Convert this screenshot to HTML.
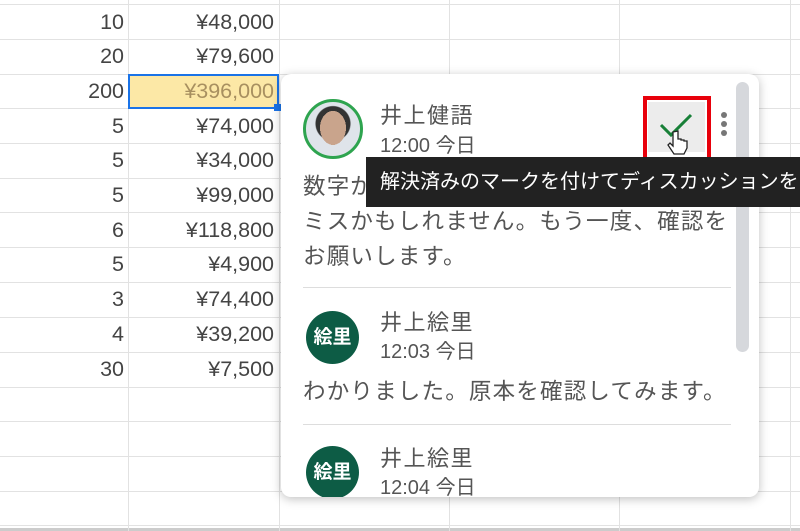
<!DOCTYPE html>
<html><head><meta charset="utf-8"><style>
*{margin:0;padding:0;box-sizing:border-box}
body{width:800px;height:531px;overflow:hidden;background:#fff;position:relative;font-family:"Liberation Sans","Noto Sans CJK JP",sans-serif}
.h{position:absolute;left:0;width:800px;height:1px;background:#e2e2e2}
.v{position:absolute;top:0;height:531px;width:1px;background:#e2e2e2}
.c{position:absolute;font-size:21.5px;color:#444;text-align:right;height:35px;line-height:35px}
.card{position:absolute;left:281px;top:74px;width:478px;height:423px;background:#fff;border-radius:10px;box-shadow:0 2px 10px rgba(0,0,0,.25);overflow:hidden}
.av{position:absolute;border-radius:50%}
.nm{position:absolute;left:99px;font-size:22px;letter-spacing:1.5px;color:#555}
.tm{position:absolute;left:99px;font-size:20px;color:#555}
.tx{position:absolute;left:22px;font-size:22.5px;letter-spacing:1.2px;color:#555;line-height:35px;white-space:nowrap}
.dv{position:absolute;left:22px;width:428px;height:1px;background:#ddd}
.ini{background:#0d5c45;color:#fff;font-size:19px;text-align:center;font-weight:bold}
</style></head><body>
<div class="h" style="top:4px"></div><div class="h" style="top:39px"></div><div class="h" style="top:74px"></div><div class="h" style="top:108px"></div><div class="h" style="top:143px"></div><div class="h" style="top:178px"></div><div class="h" style="top:212px"></div><div class="h" style="top:247px"></div><div class="h" style="top:282px"></div><div class="h" style="top:317px"></div><div class="h" style="top:352px"></div><div class="h" style="top:387px"></div><div class="h" style="top:421px"></div><div class="h" style="top:456px"></div><div class="h" style="top:491px"></div><div class="h" style="top:525px"></div>
<div class="h" style="top:528px;height:3px;background:#ccc"></div>
<div class="v" style="left:128px"></div><div class="v" style="left:279px"></div><div class="v" style="left:449px"></div><div class="v" style="left:619px"></div><div class="v" style="left:790px"></div>
<div style="position:absolute;left:128px;top:74px;width:151px;height:35px;background:#fce8a6;border:2px solid #1a73e8"></div>
<div style="position:absolute;left:274px;top:104px;width:7px;height:7px;background:#1a73e8"></div>
<div class="c" style="left:0;width:124px;top:5px">10</div><div class="c" style="left:130px;width:144px;top:5px">¥48,000</div>
<div class="c" style="left:0;width:124px;top:39px">20</div><div class="c" style="left:130px;width:144px;top:39px">¥79,600</div>
<div class="c" style="left:0;width:124px;top:74px">200</div><div class="c" style="left:130px;width:144px;top:74px;color:#a89060">¥396,000</div>
<div class="c" style="left:0;width:124px;top:109px">5</div><div class="c" style="left:130px;width:144px;top:109px">¥74,000</div>
<div class="c" style="left:0;width:124px;top:143px">5</div><div class="c" style="left:130px;width:144px;top:143px">¥34,000</div>
<div class="c" style="left:0;width:124px;top:178px">5</div><div class="c" style="left:130px;width:144px;top:178px">¥99,000</div>
<div class="c" style="left:0;width:124px;top:213px">6</div><div class="c" style="left:130px;width:144px;top:213px">¥118,800</div>
<div class="c" style="left:0;width:124px;top:247px">5</div><div class="c" style="left:130px;width:144px;top:247px">¥4,900</div>
<div class="c" style="left:0;width:124px;top:282px">3</div><div class="c" style="left:130px;width:144px;top:282px">¥74,400</div>
<div class="c" style="left:0;width:124px;top:317px">4</div><div class="c" style="left:130px;width:144px;top:317px">¥39,200</div>
<div class="c" style="left:0;width:124px;top:352px">30</div><div class="c" style="left:130px;width:144px;top:352px">¥7,500</div>
<div class="card">
<div class="av" style="left:22px;top:25px;width:60px;height:60px;border:3px solid #2ea44f;background:radial-gradient(ellipse 13px 17px at 50% 48%,#c9a48c 0 100%,transparent 100%),radial-gradient(circle at 50% 40%,#333 0 17px,#dfe4ea 18px)"></div>
<div class="nm" style="top:24px">井上健語</div>
<div class="tm" style="top:55px">12:00 今日</div>
<div style="position:absolute;left:367px;top:28px;width:57px;height:50px;background:#ececec"></div>
<svg style="position:absolute;left:376px;top:36px" width="40" height="32" viewBox="0 0 40 32"><path d="M4 15 L14 25 L34 5" fill="none" stroke="#188038" stroke-width="3"/></svg>
<div style="position:absolute;left:362px;top:22px;width:68px;height:68px;border:4px solid #e8000b"></div>
<svg style="position:absolute;left:386px;top:56px" width="24" height="30" viewBox="0 0 24 30"><path d="M6 2 v14 l-3 -3 l-2 2 l6 9 h10 l3 -6 v-7 l-3 0 v-1 l-3 0 v-1 l-3 0 v-8 z" fill="#fff" stroke="#222" stroke-width="1.3"/></svg>
<div style="position:absolute;left:440px;top:38px;width:6px;height:6px;border-radius:50%;background:#777;box-shadow:0 9px 0 #777,0 18px 0 #777"></div>
<div class="tx" style="top:95px">数字が<br>ミスかもしれません。もう一度、確認を<br>お願いします。</div>
<div class="dv" style="top:213px"></div>
<div class="av ini" style="left:25px;top:237px;width:53px;height:53px;line-height:53px">絵里</div>
<div class="nm" style="top:231px">井上絵里</div>
<div class="tm" style="top:261px">12:03 今日</div>
<div class="tx" style="top:300px">わかりました。原本を確認してみます。</div>
<div class="dv" style="top:350px"></div>
<div class="av ini" style="left:25px;top:372px;width:53px;height:53px;line-height:53px">絵里</div>
<div class="nm" style="top:367px">井上絵里</div>
<div class="tm" style="top:397px">12:04 今日</div>
<div style="position:absolute;left:455px;top:8px;width:13px;height:270px;border-radius:7px;background:#d6d8dc"></div>
</div>
<div style="position:absolute;left:366px;top:157px;width:440px;height:50px;background:#222;color:#fff;font-size:20px;line-height:50px;padding-left:14px;white-space:nowrap;overflow:hidden">解決済みのマークを付けてディスカッションを</div>
</body></html>
